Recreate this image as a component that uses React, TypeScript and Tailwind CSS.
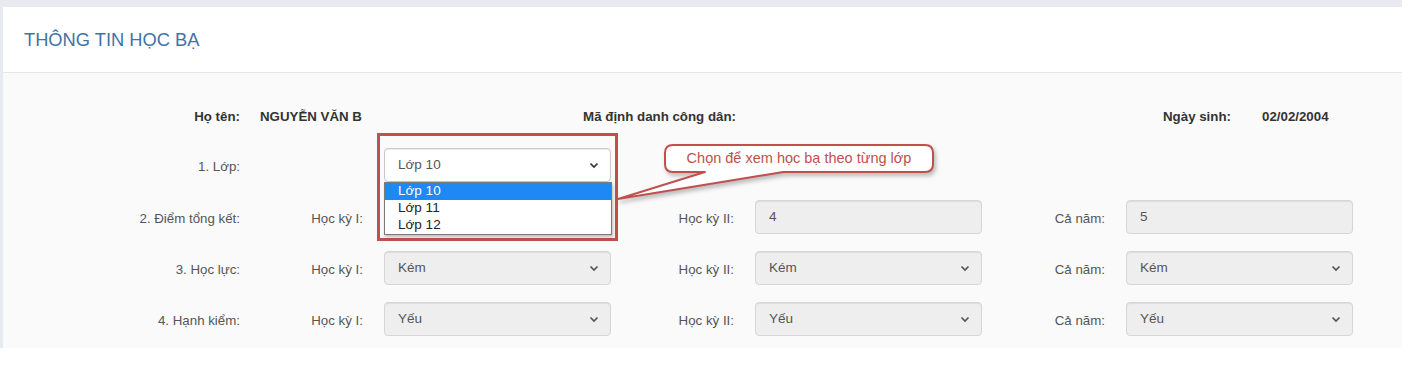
import React from 'react';

const Chevron: React.FC<{ dark?: boolean }> = ({ dark }) => (
  <svg width="10" height="7" viewBox="0 0 10 7" className="shrink-0">
    <path d="M1.5 1.5l3.5 3.5 3.5-3.5" fill="none" stroke={dark ? '#333' : '#555'} strokeWidth="1.7" />
  </svg>
);

const Field: React.FC<{ value: string; select?: boolean; enabled?: boolean }> = ({ value, select, enabled }) => (
  <div
    className={`w-[227px] h-[34px] rounded-[4px] border flex items-center justify-between pl-[13px] pr-[11px] text-[13.5px] text-[#555] shadow-[inset_0_1px_1px_rgba(0,0,0,0.075)] ${
      enabled ? 'bg-white border-[#c8c8c8]' : 'bg-[#eeeeee] border-[#d6d6d6]'
    }`}
  >
    <span>{value}</span>
    {select && <Chevron dark={enabled} />}
  </div>
);

const Group: React.FC<{ label?: string; children: React.ReactNode }> = ({ label, children }) => (
  <div className="w-[371px] flex items-center">
    <div className="flex-1 text-right pr-[21px] pt-[4px]">{label}</div>
    {children}
  </div>
);

const Row: React.FC<{ label: string; className?: string; children: React.ReactNode }> = ({ label, className, children }) => (
  <div className={`h-[34px] flex items-center ${className ?? ''}`}>
    <div className="w-[237px] text-right pt-[4px]">{label}</div>
    {children}
  </div>
);

export default function App() {
  return (
    <div className="font-['Liberation_Sans',Arial,sans-serif]">
      <div className="bg-[#e7eaee] pt-[7px] pl-[3px]">
        <div className="bg-white">
          <div className="h-[66px] flex items-center pl-[21px] border-b border-[#e6e6e6] text-[18.3px] text-[#4173a8]">
            THÔNG TIN HỌC BẠ
          </div>

          <div className="bg-[#fafafa] pt-[27px] pb-[12px] text-[13.3px] text-[#555]">
            {/* Thông tin học sinh */}
            <div className="h-[34px] flex items-center font-bold text-[#333]">
              <div className="w-[237px] text-right">Họ tên:</div>
              <div className="w-[256px] pl-[20px]">NGUYỄN VĂN B</div>
              <div className="w-[240px] text-right">Mã định danh công dân:</div>
              <div className="w-[255px]"></div>
              <div className="w-[240px] text-right">Ngày sinh:</div>
              <div className="pl-[31px]">02/02/2004</div>
            </div>

            <Row label="1. Lớp:" className="mt-[14px]">
              <Group>
                <div className="relative">
                  <Field value="Lớp 10" select enabled />

                  {/* khung đỏ */}
                  <div className="absolute left-[-7px] top-[-15px] w-[241px] h-[108px] border-[3px] border-[#c0504d] z-10" />

                  {/* danh sách lớp */}
                  <div className="absolute left-0 top-[34px] w-[228px] bg-white border border-[#7a7a7a] shadow-[1px_2px_3px_rgba(0,0,0,0.25)] text-[13.5px] text-[#222] z-20">
                    <div className="h-[17px] flex items-center pl-[13px] bg-[#1e88f5] text-white">Lớp 10</div>
                    <div className="h-[17px] flex items-center pl-[13px]">Lớp 11</div>
                    <div className="h-[17px] flex items-center pl-[13px]">Lớp 12</div>
                  </div>

                  {/* chú thích */}
                  <div className="absolute left-[231px] top-[-8px] w-[325px] h-[65px] z-30">
                    <svg width="325" height="65" viewBox="0 0 325 65" className="absolute inset-0 drop-shadow-[2px_3px_2px_rgba(0,0,0,0.25)]">
                      <path
                        d="M58 5H310Q318 5 318 13V24Q318 32 310 32H168L3 59L90 32H58Q50 32 50 24V13Q50 5 58 5Z"
                        fill="#fff"
                        stroke="#c0504d"
                        strokeWidth="2"
                        strokeLinejoin="round"
                      />
                    </svg>
                    <div className="absolute left-[50px] top-[5px] w-[268px] h-[27px] flex items-center justify-center text-[14.5px] text-[#c0504d]">
                      Chọn để xem học bạ theo từng lớp
                    </div>
                  </div>
                </div>
              </Group>
            </Row>

            <Row label="2. Điểm tổng kết:" className="mt-[18px]">
              <Group label="Học kỳ I:">
                <Field value="" />
              </Group>
              <Group label="Học kỳ II:">
                <Field value="4" />
              </Group>
              <Group label="Cả năm:">
                <Field value="5" />
              </Group>
            </Row>

            <Row label="3. Học lực:" className="mt-[17px]">
              <Group label="Học kỳ I:">
                <Field value="Kém" select />
              </Group>
              <Group label="Học kỳ II:">
                <Field value="Kém" select />
              </Group>
              <Group label="Cả năm:">
                <Field value="Kém" select />
              </Group>
            </Row>

            <Row label="4. Hạnh kiểm:" className="mt-[17px]">
              <Group label="Học kỳ I:">
                <Field value="Yếu" select />
              </Group>
              <Group label="Học kỳ II:">
                <Field value="Yếu" select />
              </Group>
              <Group label="Cả năm:">
                <Field value="Yếu" select />
              </Group>
            </Row>
          </div>
        </div>
      </div>
    </div>
  );
}
